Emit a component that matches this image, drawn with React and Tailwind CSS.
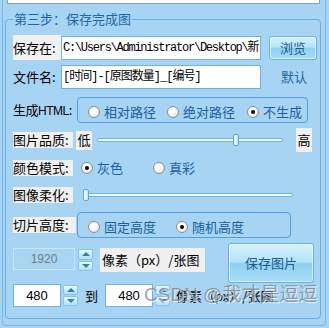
import React from "react";

const cjk = "font-['Noto_Sans_CJK_SC','Noto_Sans',sans-serif]";

function Radio({ checked, label, className = "" }) {
  return (
    <div className={"flex items-center " + className}>
      <span className="w-[12px] h-[12px] shrink-0 rounded-full border border-[#8d8d8d] bg-[radial-gradient(circle_at_35%_35%,#ffffff_30%,#d6d6d6_100%)] flex items-center justify-center">
        {checked && <span className="w-[4px] h-[4px] rounded-full bg-black" />}
      </span>
      <span className="ml-[4px] text-[13px] leading-[16px] text-[#1a5fa0] whitespace-nowrap">{label}</span>
    </div>
  );
}

function Slider({ width, thumb }) {
  return (
    <div className="relative h-[14px] flex items-center" style={{ width }}>
      <div className="w-full h-[4px] rounded-full border border-[#6cb4e6] bg-[#f4fbff]" />
      <div
        className="absolute top-[1px] w-[6px] h-[12px] rounded-[2px] border border-[#58a6de] bg-[linear-gradient(to_right,#ffffff,#bfe4fb)]"
        style={{ left: thumb }}
      />
    </div>
  );
}

function Spinner({ h }) {
  const half =
    "flex-1 flex items-center justify-center border border-[#86c3ea] rounded-[2px] bg-[linear-gradient(to_bottom,#eaf8fe,#b4def7)]";
  return (
    <div className="w-[15px] flex flex-col gap-[1px]" style={{ height: h }}>
      <div className={half}>
        <span className="w-0 h-0 border-x-[4px] border-x-transparent border-b-[4px] border-b-[#2a82b2]" />
      </div>
      <div className={half}>
        <span className="w-0 h-0 border-x-[4px] border-x-transparent border-t-[4px] border-t-[#2a82b2]" />
      </div>
    </div>
  );
}

const btn =
  "flex items-center justify-center rounded-[3px] border border-[#5fb3e6] text-[13px] text-[#1d5a8e] bg-[linear-gradient(to_bottom,#d4f1fd_0%,#b4e4fa_46%,#90d0f3_52%,#a6dcf7_100%)] shadow-[inset_0_0_0_1px_rgba(255,255,255,0.6)]";

const gray = "bg-[#f0f0f0] flex items-center text-[13px] text-black whitespace-nowrap";

const field =
  "w-[200px] h-[24px] bg-white border border-[#6fb1e6] pl-[1px] flex items-center overflow-hidden whitespace-nowrap font-['Liberation_Mono','Noto_Sans_CJK_SC',monospace] text-[12px] text-black";

export default function App() {
  return (
    <div className={"relative w-[329px] h-[328px] overflow-hidden bg-[#a7d4f3] " + cjk}>
      <div className="ml-[2px] w-[324px] h-[326px] border-x border-b border-[#78b6ec] rounded-b-[4px]">
        <div className="ml-[4px] w-[313px] h-[4px] bg-white border-x border-b border-[#8aa0b4]" />

        <div className="relative ml-[2px] mt-[15px] w-[316px] h-[300px] border border-[#6aaee8] rounded-[4px] pl-[7px]">
          <span className="absolute left-[7px] top-[-9px] px-[1px] bg-[#a7d4f3] text-[13px] leading-[16px] text-[#1f66a8]">
            第三步：保存完成图
          </span>

          {/* 保存在 */}
          <div className="flex mt-[15px] h-[25px]">
            <div className={gray + " w-[48px] h-[25px]"}>保存在:</div>
            <div className={field + " mt-[1px] tracking-[-1.25px]"}>C:\Users\Administrator\Desktop\新</div>
            <button className={btn + " ml-[8px] mt-[1px] w-[48px] h-[24px]"}>浏览</button>
          </div>

          {/* 文件名 */}
          <div className="flex items-center mt-[5px] h-[24px]">
            <div className="w-[48px] text-[13px] text-black whitespace-nowrap">文件名:</div>
            <div className={field + " tracking-[-1px]"}>[时间]-[原图数量]_[编号]</div>
            <span className="ml-[20px] text-[13px] text-[#1f66a8]">默认</span>
          </div>

          {/* 生成HTML */}
          <div className="flex items-center mt-[8px] h-[26px]">
            <div className="w-[64px] text-[13px] text-black whitespace-nowrap tracking-[-0.5px]">
              生成<span className="font-['Liberation_Sans',sans-serif] text-[12px]">HTML</span>:
            </div>
            <div className="w-[231px] h-[26px] border border-[#4f9ee6] rounded-[4px] flex items-center pl-[10px] pt-[3px]">
              <Radio className="w-[79px]" label="相对路径" />
              <Radio className="w-[80px]" label="绝对路径" />
              <Radio checked label="不生成" />
            </div>
          </div>

          {/* 图片品质 */}
          <div className="flex items-center mt-[5px] h-[24px]">
            <div className={gray + " w-[60px] h-[16px]"}>图片品质:</div>
            <div className={gray + " ml-[3px] w-[16px] h-[19px] justify-center"}>低</div>
            <div className="ml-[5px]">
              <Slider width={186} thumb={136} />
            </div>
            <div className={gray + " ml-[13px] w-[16px] h-[24px] justify-center"}>高</div>
          </div>

          {/* 颜色模式 */}
          <div className="flex items-center mt-[8px] h-[16px]">
            <div className={gray + " w-[60px] h-[16px]"}>颜色模式:</div>
            <Radio checked className="ml-[8px] w-[72px]" label="灰色" />
            <Radio label="真彩" />
          </div>

          {/* 图像柔化 */}
          <div className="flex items-center mt-[11px] h-[16px]">
            <div className={gray + " w-[60px] h-[16px]"}>图像柔化:</div>
            <div className="ml-[10px]">
              <Slider width={210} thumb={0} />
            </div>
          </div>

          {/* 切片高度 */}
          <div className="flex items-center mt-[9px] h-[26px]">
            <div className={gray + " w-[63px] h-[16px]"}>切片高度:</div>
            <div className="ml-[1px] w-[214px] h-[26px] border border-[#4f9ee6] rounded-[4px] flex items-center pl-[10px] pt-[3px]">
              <Radio className="w-[88px]" label="固定高度" />
              <Radio checked label="随机高度" />
            </div>
          </div>

          {/* 1920 row */}
          <div className="flex items-start mt-[5px] h-[40px]">
            <div className="mt-[5px] w-[62px] h-[22px] border border-[#cbe6fa] bg-[#a9d4f2] flex items-center justify-center font-['Liberation_Sans',sans-serif] text-[12px] text-[#6f7d8a]">
              1920
            </div>
            <div className="ml-[3px] mt-[6px]">
              <Spinner h={22} />
            </div>
            <div className={gray + " ml-[7px] mt-[5px] w-[105px] h-[24px] pl-[2px]"}>像素（px）/张图</div>
            <button className={btn + " ml-[23px] w-[86px] h-[40px]"}>保存图片</button>
          </div>

          {/* 480 row */}
          <div className="flex items-center mt-[1px] h-[23px]">
            <div className="w-[48px] h-[23px] bg-white border border-[#6fb1e6] flex items-center justify-center font-['Liberation_Sans',sans-serif] text-[13px] text-black">
              480
            </div>
            <div className="ml-[2px]">
              <Spinner h={21} />
            </div>
            <span className="ml-[7px] text-[13px] text-black">到</span>
            <div className="ml-[7px] w-[48px] h-[23px] bg-white border border-[#6fb1e6] flex items-center justify-center font-['Liberation_Sans',sans-serif] text-[13px] text-black">
              480
            </div>
            <div className="ml-[2px]">
              <Spinner h={21} />
            </div>
            <span className="ml-[6px] text-[13px] text-black whitespace-nowrap">像素（px）/张图</span>
          </div>
        </div>
      </div>

      {/* watermark */}
      <div className="absolute left-[144px] top-[281px] text-[19px] leading-[24px] whitespace-nowrap text-[rgba(125,130,135,0.75)] [text-shadow:1px_1px_0_rgba(255,255,255,0.7)]">
        <span className="font-['Liberation_Sans',sans-serif]">CSDN @</span>我才是逗逗
      </div>
    </div>
  );
}
